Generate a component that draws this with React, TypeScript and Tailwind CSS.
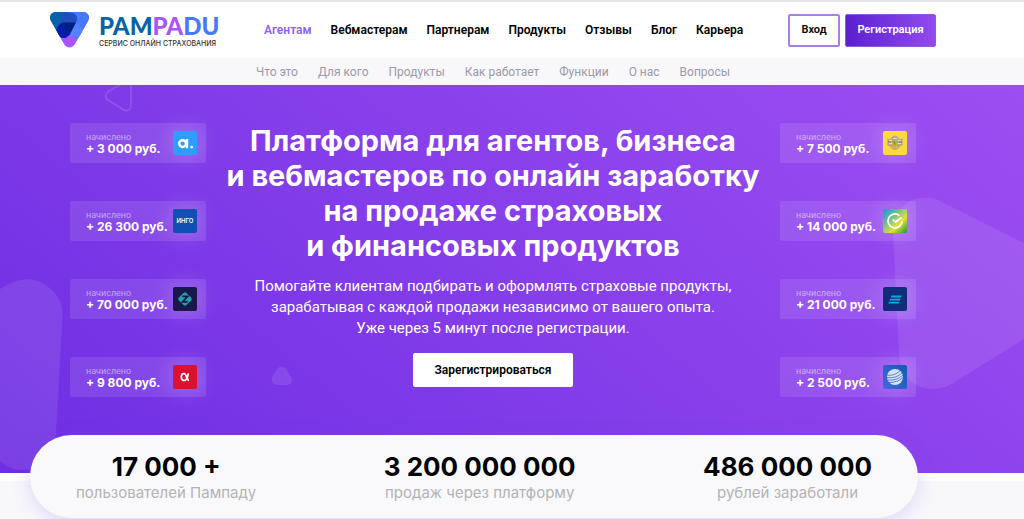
import React from "react";

const mainLinks = [
  { label: "Агентам", active: true },
  { label: "Вебмастерам" },
  { label: "Партнерам" },
  { label: "Продукты" },
  { label: "Отзывы" },
  { label: "Блог" },
  { label: "Карьера" },
];

const subLinks = [
  "Что это",
  "Для кого",
  "Продукты",
  "Как работает",
  "Функции",
  "О нас",
  "Вопросы",
];

const stats = [
  { value: "17 000 +", label: "пользователей Пампаду" },
  { value: "3 200 000 000", label: "продаж через платформу" },
  { value: "486 000 000", label: "рублей заработали" },
];

const AbsolutIcon = () => (
  <svg viewBox="0 0 24 24" className="w-6 h-6">
    <rect width="24" height="24" rx="2" fill="#2f9dff" />
    <circle cx="9.6" cy="12.6" r="3.4" fill="none" stroke="#fff" strokeWidth="2.4" />
    <path d="M14 8v9.2" stroke="#fff" strokeWidth="2.4" />
    <circle cx="18.7" cy="16.1" r="1.4" fill="#fff" />
  </svg>
);

const IngoIcon = () => (
  <svg viewBox="0 0 24 24" className="w-6 h-6">
    <rect width="24" height="24" rx="2" fill="#124fb4" />
    <text x="12" y="14" textAnchor="middle" fontSize="6" fontWeight="600" fontFamily="Inter, sans-serif" fill="#fff">
      ИНГО
    </text>
  </svg>
);

const ZettaIcon = () => (
  <svg viewBox="0 0 24 24" className="w-6 h-6">
    <rect width="24" height="24" rx="2" fill="#19174c" />
    <rect x="6.7" y="6.7" width="10.6" height="10.6" rx="2" fill="#1fa3a8" transform="rotate(45 12 12)" />
    <path d="M9.4 9.3h5.2L9.6 14.9h5" fill="none" stroke="#19174c" strokeWidth="1.8" />
  </svg>
);

const AlfaIcon = () => (
  <svg viewBox="0 0 24 24" className="w-6 h-6">
    <rect width="24" height="24" rx="2" fill="#dc1030" />
    <path
      d="M15.3 8.3c-.5 3.6-1.7 7.2-4.3 7.2-1.8 0-2.7-1.5-2.7-3.5s.9-3.5 2.7-3.5c2.6 0 2.7 6.9 5 6.9"
      fill="none"
      stroke="#fff"
      strokeWidth="1.7"
    />
  </svg>
);

const TinkoffIcon = () => (
  <svg viewBox="0 0 24 24" className="w-6 h-6">
    <rect width="24" height="24" rx="2" fill="#ffd93b" />
    <path
      d="M4 7.5l3.5.5 2-2.5 2.5-1 2.5 1 2 2.500 3.500-.5-.5 3.500.5 3-3 1.500-2 2.500-3 1-3-1-2-2.500-3-1.500.5-3z"
      fill="#b3ac88"
    />
    <path d="M6 9.5h3M6 12.5h3M15 9.5h3M15 12.5h3M10 7.5h4M9.5 16h5" stroke="#e8e2c4" strokeWidth="1" />
    <path d="M9 8.5l4 3.5 2-1-.5 4-2.5 2-2.5-2z" fill="#d9a920" />
    <path d="M10.5 10l2 3.5M5 11h3M16 11h3" stroke="#6d6a5c" strokeWidth=".8" />
  </svg>
);

const SberIcon = () => (
  <svg viewBox="0 0 24 24" className="w-6 h-6">
    <defs>
      <linearGradient id="sber" x1="0" y1="0" x2="1" y2="1">
        <stop offset="0" stopColor="#1b93e8" />
        <stop offset=".35" stopColor="#6cc08b" />
        <stop offset=".65" stopColor="#e3e03a" />
        <stop offset="1" stopColor="#149a33" />
      </linearGradient>
    </defs>
    <rect width="24" height="24" rx="2" fill="url(#sber)" />
    <path d="M16.5 6.6A7 7 0 1 0 19 12" fill="none" stroke="#fff" strokeWidth="1.7" />
    <path d="M9.5 10.5l3 2.5 6-4.5" fill="none" stroke="#fff" strokeWidth="1.8" />
  </svg>
);

const StripesIcon = () => (
  <svg viewBox="0 0 24 24" className="w-6 h-6">
    <rect width="24" height="24" rx="2" fill="#0f2d78" />
    <path d="M8.5 8.6h10.3l-.8 1.8H7.700zM7.300 11.700h10.300l-.8 1.800H6.500zM6.100 14.800h10.300l-.8 1.800H5.300z" fill="#16a5dc" />
  </svg>
);

const GlobeIcon = () => (
  <svg viewBox="0 0 24 24" className="w-6 h-6">
    <defs>
      <linearGradient id="globe" x1="0" y1="1" x2="1" y2="0">
        <stop offset="0" stopColor="#4667dd" />
        <stop offset="1" stopColor="#0c5cb2" />
      </linearGradient>
    </defs>
    <rect width="24" height="24" rx="2" fill="url(#globe)" />
    <circle cx="12" cy="12" r="8" fill="#d7e1f2" />
    <path
      d="M4 10c5 1 9-1 13-4M4 12.5c6 1 11-1 15-4.5M4.5 15c6 .5 11-1 15.500-5M6 17.500c6 0 10-1.500 14-5"
      fill="none"
      stroke="#4a75c4"
      strokeWidth=".9"
    />
  </svg>
);

const leftPayouts = [
  { sum: "+ 3 000 руб.", Icon: AbsolutIcon },
  { sum: "+ 26 300 руб.", Icon: IngoIcon },
  { sum: "+ 70 000 руб.", Icon: ZettaIcon },
  { sum: "+ 9 800 руб.", Icon: AlfaIcon },
];

const rightPayouts = [
  { sum: "+ 7 500 руб.", Icon: TinkoffIcon },
  { sum: "+ 14 000 руб.", Icon: SberIcon },
  { sum: "+ 21 000 руб.", Icon: StripesIcon },
  { sum: "+ 2 500 руб.", Icon: GlobeIcon },
];

const Logo = () => (
  <a href="#" className="flex items-center gap-2.5">
    <svg viewBox="0 0 39 36" className="w-[39px] h-9">
      <defs>
        <clipPath id="logoShape">
          <path d="M6 0h27c5 0 7.5 5 5 9L25 32c-2.5 4.5-8.5 4.5-11 0L1 9C-1.5 5 1 0 6 0z" />
        </clipPath>
      </defs>
      <g clipPath="url(#logoShape)">
        <rect width="39" height="36" fill="#a855ff" />
        <path d="M0 0h22v14l-8 12-8-2L0 12z" fill="#0662aa" />
        <path d="M19 0h20v14l-7 9c-2 4-8 4-11 0l-5-10z" fill="#4679ff" />
        <path d="M26 10.5l6.5 7c1.5 5-5 9.5-10 7l-3-2z" fill="#5583ff" />
        <path d="M13 10.5l7 12-3.5 3c-5 2-11-2-10-8 .5-3 3-6 6.5-7z" fill="#001fa6" />
        <path d="M11.5 6.5c0-8 15.5-8 15.5 0 0 2-.5 3-1.5 4.5H13C12 9.5 11.5 8.5 11.5 6.5z" fill="#1f4fc0" />
        <path d="M12.5 10.5h13.5L19.5 23z" fill="#001f82" />
      </g>
    </svg>
    <span className="flex flex-col">
      <span className="font-[Lato,sans-serif] font-black text-2xl leading-7 text-[#0662aa]">
        PAM<span className="text-[#a855ff]">PA</span>
        <span className="text-[#4679ff]">DU</span>
      </span>
      <span className="font-[Inter,sans-serif] text-[7px] leading-[8px] font-medium text-[#333]">
        СЕРВИС ОНЛАЙН СТРАХОВАНИЯ
      </span>
    </span>
  </a>
);

type Payout = { sum: string; Icon: () => React.JSX.Element };

const PayoutList = ({ items }: { items: Payout[] }) => (
  <ul className="flex flex-col gap-[38px] w-[136px] shrink-0">
    {items.map(({ sum, Icon }) => (
      <li
        key={sum}
        className="flex items-center justify-between h-10 pl-4 pr-[9px] rounded-xs bg-white/10 whitespace-nowrap"
      >
        <div>
          <div className="text-[9px] leading-3 text-white/50">начислено</div>
          <div className="font-[Inter,sans-serif] text-xs leading-3 font-bold text-white">{sum}</div>
        </div>
        <span className="rounded-xs shadow-[0_0_20px_4px_rgba(255,255,255,0.16)]">
          <Icon />
        </span>
      </li>
    ))}
  </ul>
);

const Header = () => (
  <header>
    <div className="flex items-center justify-between h-[58px] pl-[50px] pr-[88px] border-t-2 border-[#e2e6ec] bg-white">
      <Logo />
      <nav className="flex gap-[19px] text-xs font-semibold">
        {mainLinks.map((link) => (
          <a key={link.label} href="#" className={link.active ? "text-[#8c62ff]" : "text-black"}>
            {link.label}
          </a>
        ))}
      </nav>
      <div className="flex gap-[5px] text-[11px] font-semibold">
        <button className="h-[33px] w-[52px] border-2 border-[#a77fe6] rounded-xs bg-white">Вход</button>
        <button className="h-[33px] w-[91px] border border-[#8f5ae4] rounded-xs text-white bg-linear-to-r from-[#5b1ed0] to-[#9349ee]">
          Регистрация
        </button>
      </div>
    </div>
    <nav className="flex justify-center items-center gap-5 h-[27px] pr-[38px] bg-[#f8f8fb] text-xs text-[#9c99a8]">
      {subLinks.map((label) => (
        <a key={label} href="#">
          {label}
        </a>
      ))}
    </nav>
  </header>
);

const HeroShapes = () => (
  <>
    <svg viewBox="0 0 30 30" className="absolute left-[104px] -top-0.5 w-[30px] h-[30px]" fill="none">
      <path
        d="M5 8L18 .5q9-3 9 4V23q-1 6-7 4L4 17q-5-4 1-9z"
        stroke="#fff"
        strokeOpacity=".12"
        strokeWidth="2"
      />
    </svg>
    <svg viewBox="0 0 64 194" className="absolute left-0 top-[193px] w-16 h-[194px]">
      <path d="M0 11C20-1 32-1 44 6s19 18 18.5 33L56 155c-1 22-18 37-35 37-8 0-14-3-21-9z" fill="#fff" fillOpacity=".09" />
    </svg>
    <svg viewBox="0 0 22 20" className="absolute left-[271px] top-[281px] w-[22px] h-5">
      <path d="M6 3q4-5 9 0l5 8q3 7-4 8H6q-6-1-5-8z" fill="#fff" fillOpacity=".1" />
    </svg>
    <svg viewBox="0 0 132 194" className="absolute right-0 top-[112px] w-[132px] h-[194px]">
      <path
        d="M1 36C1 8 26-8 50 5l82 41v96l-66 41C40 202 8 190 7 155z"
        fill="#fff"
        fillOpacity=".09"
      />
    </svg>
  </>
);

const Hero = () => (
  <section className="relative overflow-hidden h-[388px] bg-linear-[40deg] from-[#6e2ee3] to-[#9d4ef2]">
    <HeroShapes />
    <div className="relative flex justify-between pt-[38px] pl-[70px] pr-[108px]">
      <PayoutList items={leftPayouts} />
      <div className="flex flex-col items-center text-center text-white whitespace-nowrap">
        <h1 className="font-[Inter,sans-serif] text-[29px] leading-[35px] font-bold">
          Платформа для агентов, бизнеса
          <br />и вебмастеров по онлайн заработку
          <br />
          на продаже страховых
          <br />и финансовых продуктов
        </h1>
        <p className="mt-[13px] text-[15px] leading-[21px]">
          Помогайте клиентам подбирать и оформлять страховые продукты,
          <br />
          зарабатывая с каждой продажи независимо от вашего опыта.
          <br />
          Уже через 5 минут после регистрации.
        </p>
        <button className="mt-3.5 h-[34px] w-40 rounded-xs bg-white text-xs font-semibold text-black">
          Зарегистрироваться
        </button>
      </div>
      <PayoutList items={rightPayouts} />
    </div>
  </section>
);

const Stats = () => (
  <section className="pl-[30px] pr-[106px] border-t-8 border-white bg-[#f8f8fb]">
    <dl className="relative -mt-[46px] flex justify-between h-[83px] px-[46px] pt-4 rounded-full bg-[#f9f9fb] text-center font-[Inter,sans-serif] shadow-[0_4px_20px_rgba(110,80,230,0.2)]">
      {stats.map((item) => (
        <div key={item.label} className="flex flex-col-reverse justify-end">
          <dt className="text-[15px] leading-[21px] text-[#b3b3b6]">{item.label}</dt>
          <dd className="text-[26px] leading-[31px] font-bold text-black">{item.value}</dd>
        </div>
      ))}
    </dl>
  </section>
);

const App = () => (
  <div className="min-h-screen bg-[#f8f8fb] font-[Roboto,sans-serif]">
    <Header />
    <Hero />
    <Stats />
  </div>
);

export default App;
